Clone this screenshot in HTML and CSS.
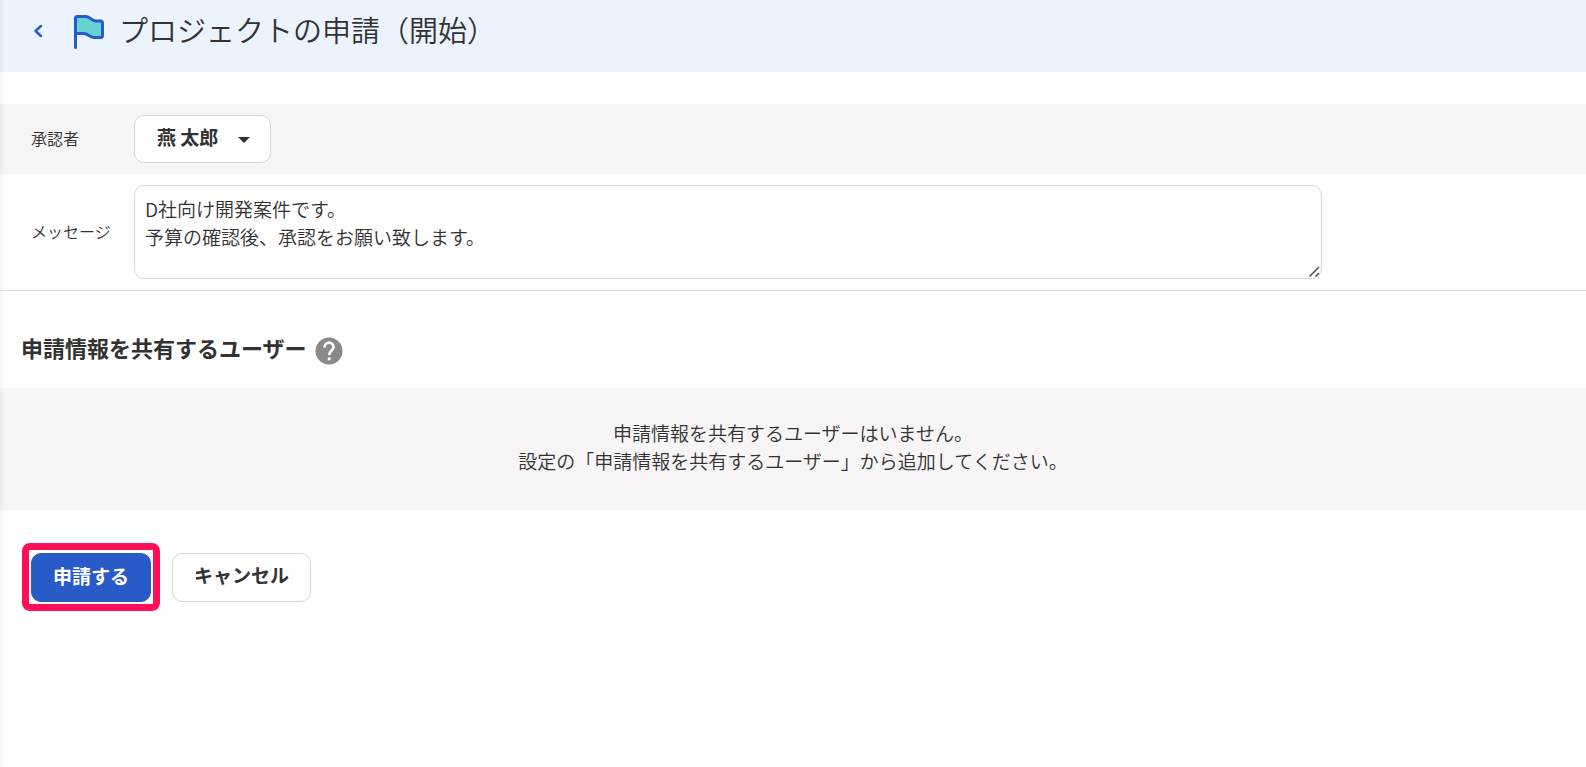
FILE: index.html
```html
<!DOCTYPE html>
<html lang="ja">
<head>
  <meta charset="UTF-8" />
  <meta name="viewport" content="width=device-width, initial-scale=1.0"/>
  <title>プロジェクトの申請（開始）</title>
  <link rel="stylesheet" href="styles.css">
</head>
<body>
  <header class="page-header">
    <a href="#" class="back" aria-label="戻る">
      <svg width="10" height="14" viewBox="0 0 10 14"><path d="M8 2 L2.500 7 L8 12" fill="none" stroke="#285ac8" stroke-width="2.500" stroke-linecap="round" stroke-linejoin="round"/></svg>
    </a>
    <svg class="flag" width="32" height="36" viewBox="0 0 32 36">
      <path d="M2.500 33.500V4.500Q2.500 2.500 4.500 2.500H13C17.500 2.500 18 7 23 7H27.500Q29.500 7 29.500 9V21.500Q29.500 23.500 27.500 23.500H21C16 23.500 15 19.500 11 19.500H2.500" fill="#66d2d2" stroke="#285ac8" stroke-width="3" stroke-linecap="round" stroke-linejoin="round"/>
    </svg>
    <h1>プロジェクトの申請（開始）</h1>
  </header>

  <main>
    <form>
      <div class="form-row gray">
        <label for="approver">承認者</label>
        <div class="select-box">
          <select id="approver">
            <option>燕 太郎</option>
          </select>
          <svg class="arrow" width="12" height="6" viewBox="0 0 12 6"><path d="M0 0H12L6 6Z" fill="#323232"/></svg>
        </div>
      </div>
      <div class="form-row message-row">
        <label for="message">メッセージ</label>
        <div class="message-box">
          <textarea id="message">D社向け開発案件です。
予算の確認後、承認をお願い致します。</textarea>
          <svg class="grip" width="13" height="13" viewBox="0 0 13 13"><path d="M1.500 11.500L11 2M7.500 11.500L11 8" fill="none" stroke="#555" stroke-width="1.600"/></svg>
        </div>
      </div>

      <div class="section-title">
        <h2>申請情報を共有するユーザー</h2>
        <button type="button" class="help" aria-label="ヘルプ">
          <svg width="28" height="28" viewBox="0 0 28 28">
            <circle cx="14" cy="14" r="13.500" fill="#8c8989"/>
            <path d="M9.500 10.500C9.500 4 18.500 4 18.500 10.300C18.500 13.300 14.200 13.800 14.200 18" fill="none" stroke="#fff" stroke-width="2.600"/>
            <rect x="12.800" y="20.500" width="2.800" height="2.800" fill="#fff"/>
          </svg>
        </button>
      </div>
      <div class="empty">
        <p>申請情報を共有するユーザーはいません。</p>
        <p>設定の「申請情報を共有するユーザー」から追加してください。</p>
      </div>

      <div class="buttons">
        <div class="highlight">
          <button type="button" class="btn primary">申請する</button>
        </div>
        <button type="button" class="btn">キャンセル</button>
      </div>
    </form>
  </main>
</body>
</html>
```

FILE: styles.css
```css
* {
  margin: 0;
  padding: 0;
  box-sizing: border-box;
}

body {
  font-family: "Noto Sans CJK JP", sans-serif;
  font-size: 19px;
  line-height: 28px;
  font-weight: 350;
  color: #323232;
  background: #fff;
  min-height: 100vh;
}

body::before {
  content: "";
  position: fixed;
  top: 0;
  left: 0;
  width: 5px;
  height: 100%;
  background: linear-gradient(to right, rgba(0, 0, 0, 0.04), transparent);
}

svg {
  display: block;
}

.page-header {
  display: flex;
  align-items: center;
  height: 72px;
  padding: 0 31px 12px;
  background: #ebf3ff;
}

.back {
  padding: 4px 2px 2px;
}

.flag {
  margin: 4px 14px 0 28px;
}

.page-header h1 {
  font-size: 29px;
  font-weight: 350;
  line-height: 40px;
  padding-bottom: 2px;
}

main {
  padding-top: 32px;
}

.form-row {
  display: grid;
  grid-template-columns: 103px 1fr;
  align-items: center;
  padding: 11px 0 11px 31px;
}

.form-row label {
  font-size: 16px;
  padding-bottom: 2px;
}

.gray,
.empty {
  background: #f7f5f6;
}

.message-row {
  border-bottom: 1px solid #e1e1e1;
}

.select-box {
  position: relative;
  justify-self: start;
}

.select-box select {
  display: block;
  appearance: none;
  height: 48px;
  padding: 0 51px 4px 22px;
  border: 1px solid #d7d7d7;
  border-radius: 10px;
  background: #fff;
  color: inherit;
  font: inherit;
  font-weight: 700;
}

.arrow {
  position: absolute;
  right: 21px;
  top: 22px;
  pointer-events: none;
}

.message-box {
  position: relative;
  width: calc(75vw - 2px);
}

.message-box textarea {
  display: block;
  width: 100%;
  height: 94px;
  padding: 9px 10px;
  border: 1px solid #d7d7d7;
  border-radius: 10px;
  color: inherit;
  font: inherit;
  resize: none;
}

.grip {
  position: absolute;
  right: 1px;
  bottom: 1px;
}

.section-title {
  display: flex;
  align-items: flex-end;
  gap: 8px;
  padding: 42px 21px 23px;
}

.section-title h2 {
  font-size: 22px;
  font-weight: 700;
  line-height: 28px;
  padding-bottom: 4px;
}

.help {
  border: none;
  background: none;
  cursor: pointer;
}

.empty {
  padding: 31px 0 35px;
  text-align: center;
}

.buttons {
  display: flex;
  align-items: center;
  gap: 12px;
  padding: 33px 22px;
}

.highlight {
  padding: 3px 2px 2px;
  border: 7px solid #ff0f5a;
  border-radius: 8px;
}

.btn {
  display: block;
  height: 49px;
  padding: 0 21px 4px;
  border: 1px solid #d7d7d7;
  border-radius: 10px;
  background: #fff;
  color: inherit;
  font: inherit;
  font-weight: 700;
  cursor: pointer;
}

.primary {
  border-color: #285ac8;
  background: #285ac8;
  color: #fff;
}
```
